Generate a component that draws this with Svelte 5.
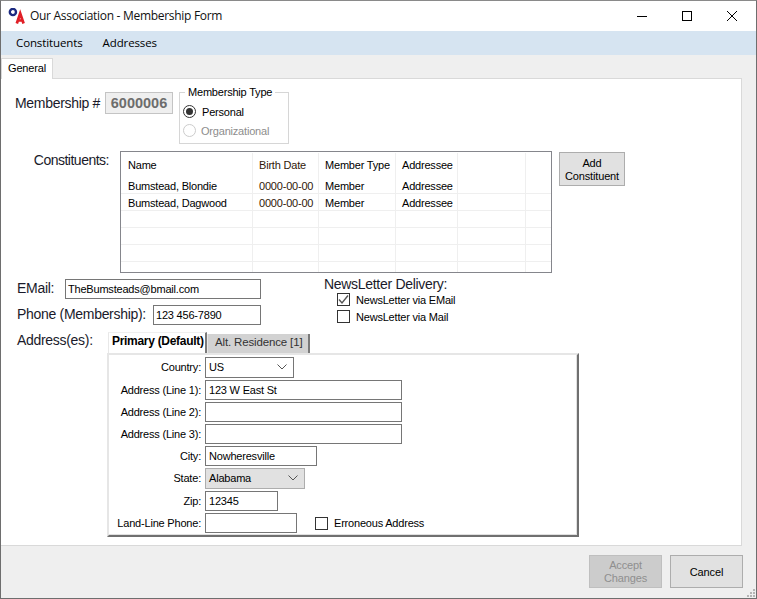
<script>
  const columns = ['Name', 'Birth Date', 'Member Type', 'Addressee', '', ''];
  const rows = [
    ['Bumstead, Blondie', '0000-00-00', 'Member', 'Addressee', '', ''],
    ['Bumstead, Dagwood', '0000-00-00', 'Member', 'Addressee', '', ''],
    ['', '', '', '', '', ''],
    ['', '', '', '', '', ''],
    ['', '', '', '', '', ''],
    ['', '', '', '', '', '']
  ];
</script>

<div class="window">
  <header class="titlebar">
    <svg class="logo" width="17" height="16" viewBox="0 0 17 16">
      <circle cx="4.9" cy="4" r="3.1" fill="none" stroke="#1c2a80" stroke-width="2.4" />
      <path d="M8.8 15.5 L12.2 5.5 L15.6 15.5 M10 12.5 H14.5" fill="none" stroke="#e01f26" stroke-width="2.7" />
    </svg>
    <span class="title">Our Association - Membership Form</span>
    <div class="controls">
      <svg width="12" height="12" viewBox="0 0 12 12"><path d="M1 6.5H11" stroke="#000" stroke-width="1" /></svg>
      <svg width="12" height="12" viewBox="0 0 12 12"><rect x="1.5" y="1.5" width="9" height="9" fill="none" stroke="#000" /></svg>
      <svg width="12" height="12" viewBox="0 0 12 12"><path d="M1 1L11 11M11 1L1 11" stroke="#000" stroke-width="1" /></svg>
    </div>
  </header>

  <nav class="menubar">
    <span>Constituents</span>
    <span>Addresses</span>
  </nav>

  <div class="tabstrip"><span class="main-tab">General</span></div>

  <main class="panel">
    <section class="row-top">
      <span class="big-label member-label">Membership #</span>
      <span class="member-no">6000006</span>
      <fieldset class="type-group">
        <legend>Membership Type</legend>
        <label class="radio"><i class="dot on"></i>Personal</label>
        <label class="radio disabled"><i class="dot"></i>Organizational</label>
      </fieldset>
    </section>

    <section class="row-grid">
      <span class="big-label grid-label">Constituents:</span>
      <div class="grid">
        <div class="grid-row head">
          {#each columns as c}<div class="cell">{c}</div>{/each}
        </div>
        {#each rows as r}
          <div class="grid-row">
            {#each r as c}<div class="cell">{c}</div>{/each}
          </div>
        {/each}
      </div>
      <button class="btn add">Add<br />Constituent</button>
    </section>

    <section class="row-contact">
      <div class="contact-fields">
        <div class="line email">
          <span class="big-label">EMail:</span>
          <span class="input">TheBumsteads@bmail.com</span>
        </div>
        <div class="line phone">
          <span class="big-label">Phone (Membership):</span>
          <span class="input">123 456-7890</span>
        </div>
      </div>
      <div class="newsletter">
        <div class="big-label">NewsLetter Delivery:</div>
        <label class="check">
          <i class="box"><svg width="11" height="11" viewBox="0 0 11 11"><path d="M1 5.5L4 9L10 1.5" fill="none" stroke="#555" stroke-width="1.4" /></svg></i>NewsLetter via EMail
        </label>
        <label class="check"><i class="box"></i>NewsLetter via Mail</label>
      </div>
    </section>

    <section class="row-address">
      <span class="big-label addr-label">Address(es):</span>
      <div class="addr-tabs">
        <div class="addr-strip">
          <span class="addr-tab active">Primary (Default)</span>
          <span class="addr-tab">Alt. Residence [1]</span>
        </div>
        <div class="addr-pane">
          <div class="f tall"><span class="l">Country:</span><span class="input select w89">US<svg width="10" height="6" viewBox="0 0 10 6"><path d="M0.5 0.5L5 5L9.5 0.5" fill="none" stroke="#555" /></svg></span></div>
          <div class="f"><span class="l">Address (Line 1):</span><span class="input w197">123 W East St</span></div>
          <div class="f"><span class="l">Address (Line 2):</span><span class="input w197"></span></div>
          <div class="f"><span class="l">Address (Line 3):</span><span class="input w197"></span></div>
          <div class="f"><span class="l">City:</span><span class="input w112">Nowheresville</span></div>
          <div class="f tall"><span class="l">State:</span><span class="input select w100 grey">Alabama<svg width="10" height="6" viewBox="0 0 10 6"><path d="M0.5 0.5L5 5L9.5 0.5" fill="none" stroke="#555" /></svg></span></div>
          <div class="f"><span class="l">Zip:</span><span class="input w73">12345</span></div>
          <div class="f">
            <span class="l">Land-Line Phone:</span><span class="input w92"></span>
            <label class="check err"><i class="box"></i>Erroneous Address</label>
          </div>
        </div>
      </div>
    </section>
  </main>

  <footer class="footer">
    <button class="btn action disabled">Accept<br />Changes</button>
    <button class="btn action cancel">Cancel</button>
    <svg class="grip" width="9" height="9" viewBox="0 0 9 9">
      <path d="M7 1h2v2H7zM4 4h2v2H4zM7 4h2v2H7zM1 7h2v2H1zM4 7h2v2H4zM7 7h2v2H7z" fill="#b5b5b5" />
    </svg>
  </footer>
</div>

<style>
  :global(body) { margin: 0; background: #fff; }
  .window {
    position: relative;
    box-sizing: border-box;
    width: 757px;
    height: 599px;
    border: 1px solid #6e6e6e;
    border-top-color: #8a8a8a;
    background: #efefef;
    display: flex;
    flex-direction: column;
    overflow: hidden;
    font: 11px "Liberation Sans", Arial, sans-serif;
    color: #000;
  }
  .titlebar {
    height: 30px;
    flex: none;
    background: #fff;
    display: flex;
    align-items: center;
    padding-left: 7px;
  }
  .logo { margin-right: 5px; margin-top: -1px; }
  .title { font: 12px "Open Sans", sans-serif; letter-spacing: -0.025em; color: #111; margin-top: -2px; }
  .controls { margin-left: auto; display: flex; gap: 33px; padding-right: 18px; }
  .controls svg { display: block; }
  .menubar {
    box-sizing: border-box;
    height: 24px;
    flex: none;
    background: #d6e4f1;
    display: flex;
    align-items: center;
    gap: 20px;
    padding: 0 0 2px 15px;
    font: 11.5px "Open Sans", sans-serif;
    letter-spacing: -0.01em;
  }
  .tabstrip { height: 23px; flex: none; display: flex; align-items: flex-end; }
  .main-tab {
    box-sizing: border-box;
    width: 52px;
    height: 21px;
    padding: 3px 0 0 6px;
    background: #fff;
    border: 1px solid #d9d9d9;
    border-bottom: 0;
    margin-bottom: -1px;
    position: relative;
    z-index: 1;
    font-size: 11px;
    letter-spacing: -0.15px;
  }
  .panel {
    box-sizing: border-box;
    width: 741px;
    height: 468px;
    flex: none;
    background: #fff;
    border: 1px solid #d9d9d9;
    border-left: 0;
    padding: 13px 0 0 14px;
    display: flex;
    flex-direction: column;
  }
  .big-label { font-size: 14px; letter-spacing: -0.3px; color: #1a1a2a; white-space: nowrap; }

  .row-top { display: flex; height: 52px; }
  .row-top > .big-label { margin-top: 3px; }
  .member-label { width: 85px; flex: none; }
  .member-no {
    box-sizing: border-box;
    margin-left: 5px;
    width: 68px;
    height: 22px;
    border: 1px solid #c4c4c4;
    background: #efefef;
    color: #6d6d6d;
    font: bold 14.5px "Liberation Sans", sans-serif;
    text-align: center;
    line-height: 20px;
  }
  .type-group {
    box-sizing: border-box;
    margin: -6px 0 0 6px;
    padding: 0 0 0 3px;
    width: 110px;
    height: 58px;
    border: 1px solid #d6d6d6;
  }
  .type-group legend { padding: 0 3px; margin-left: 2px; font-size: 11px; line-height: 12px; letter-spacing: -0.2px; }
  .radio { display: flex; align-items: center; gap: 6px; height: 19px; font-size: 11px; letter-spacing: -0.2px; margin-top: 4px; }
  .radio + .radio { margin-top: 0; }
  .radio.disabled { color: #8d8d8d; gap: 5px; }
  .dot {
    box-sizing: border-box;
    width: 13px;
    height: 13px;
    border-radius: 50%;
    border: 1px solid #333;
    background: #fff;
    position: relative;
  }
  .dot.on::after {
    content: "";
    position: absolute;
    inset: 2px;
    border-radius: 50%;
    background: #333;
  }
  .disabled .dot { border-color: #ccc; }

  .row-grid { display: flex; align-items: flex-start; margin-top: 7px; height: 122px; }
  .grid-label { width: 94px; flex: none; text-align: right; margin-top: 1px; letter-spacing: -0.5px; }
  .grid {
    box-sizing: border-box;
    margin-left: 11px;
    width: 432px;
    height: 122px;
    border: 1px solid #85868c;
    overflow: hidden;
  }
  .grid-row {
    box-sizing: border-box;
    display: grid;
    grid-template-columns: 132px 66px 77px 62px 68px 30px;
    height: 17px;
    border-bottom: 1px solid #efefef;
    font-size: 11px;
    letter-spacing: -0.2px;
  }
  .grid-row.head { height: 24px; border-bottom: 0; margin-top: 1px; }
  .cell {
    box-sizing: border-box;
    padding: 1px 0 0 7px;
    border-right: 1px solid #efefef;
    line-height: 16px;
    white-space: nowrap;
    overflow: hidden;
  }
  .grid-row .cell:nth-child(n+2) { padding-left: 6px; }
  .head .cell { line-height: 24px; padding-top: 0; }
  .grid-row .cell:nth-child(2) { color: #30180a; }
  .btn {
    box-sizing: border-box;
    border: 1px solid #adadad;
    background: #e1e1e1;
    padding: 0;
    font: 11px/13px "Liberation Sans", sans-serif;
    letter-spacing: -0.15px;
    color: #000;
  }
  .add { margin: 1px 0 0 7px; width: 66px; height: 34px; padding-top: 1px; }

  .row-contact { display: flex; margin-top: 6px; height: 53px; }
  .contact-fields { width: 307px; margin-left: 2px; flex: none; }
  .line { display: flex; align-items: center; height: 20px; }
  .line .big-label { position: relative; top: -1px; flex: none; }
  .phone { margin-top: 6px; }
  .email .big-label { width: 48px; }
  .phone .big-label { width: 136px; }
  .email .input { width: 196px; }
  .phone .input { width: 108px; }
  .input {
    box-sizing: border-box;
    display: flex;
    align-items: center;
    height: 20px;
    padding-left: 2px;
    border: 1px solid #767676;
    background: #fff;
    font-size: 11px;
    letter-spacing: -0.2px;
    white-space: nowrap;
  }
  .newsletter { margin-top: -3px; }
  .newsletter .big-label { line-height: 16px; }
  .check { display: flex; align-items: center; gap: 6px; font-size: 11px; letter-spacing: -0.2px; }
  .newsletter .check { height: 17px; margin-left: 13px; margin-top: -1px; }
  .newsletter .check + .check { margin-top: 0; }
  .box {
    box-sizing: border-box;
    width: 13px;
    height: 13px;
    border: 1px solid #333;
    background: #fff;
    display: flex;
    align-items: center;
    justify-content: center;
  }

  .row-address { display: flex; }
  .addr-label { width: 90px; flex: none; margin-left: 2px; }
  .addr-tabs { width: 472px; }
  .addr-strip { display: flex; align-items: flex-end; height: 21px; padding-left: 1px; }
  .addr-tab {
    box-sizing: border-box;
    height: 19px;
    padding: 2px 0 0 7px;
    width: 103px;
    background: #d2d2d2;
    border-right: 2px solid #7a7a7a;
    border-left: 1px solid #e8e8e8;
    font-size: 11.5px;
    letter-spacing: -0.15px;
    color: #333;
    white-space: nowrap;
  }
  .addr-tab.active {
    height: 21px;
    width: 99px;
    padding: 1px 0 0 3px;
    background: #fff;
    color: #000;
    font-size: 12px;
    font-weight: bold;
    letter-spacing: -0.3px;
    border-top: 1px solid #efefef;
  }
  .addr-pane {
    box-sizing: border-box;
    height: 184px;
    border-left: 2px solid #e6e6e6;
    border-top: 2px solid #e6e6e6;
    border-right: 2px solid #707070;
    border-bottom: 2px solid #707070;
    box-shadow: inset -1px -1px 0 #e0e0e0;
    padding-top: 2px;
  }
  .f { display: flex; align-items: center; height: 20px; margin-bottom: 2px; }
  .f.tall { height: 21px; }
  .f.tall .input { height: 21px; padding-bottom: 1px; }
  .f.tall .l { padding-bottom: 1px; }
  .f .input { padding-left: 3px; }
  .l { width: 92px; margin-right: 4px; text-align: right; font-size: 11px; letter-spacing: -0.2px; white-space: nowrap; flex: none; }
  .w89 { width: 89px; }
  .w100 { width: 100px; }
  .w197 { width: 197px; }
  .w112 { width: 112px; }
  .w73 { width: 73px; }
  .w92 { width: 92px; }
  .select { position: relative; }
  .select svg { position: absolute; right: 6px; top: 6px; }
  .grey { background: #e1e1e1; border-color: #adadad; }
  .err { margin-left: 18px; }

  .footer {
    flex: 1;
    display: flex;
    justify-content: flex-end;
    gap: 8px;
    padding: 9px 13px 0 0;
    position: relative;
  }
  .action { width: 73px; height: 33px; }
  .cancel { padding-top: 1px; }
  .action.disabled { background: #cccccc; border-color: #bfbfbf; color: #8f8f8f; }
  .grip { position: absolute; right: 1px; bottom: 1px; }
</style>
